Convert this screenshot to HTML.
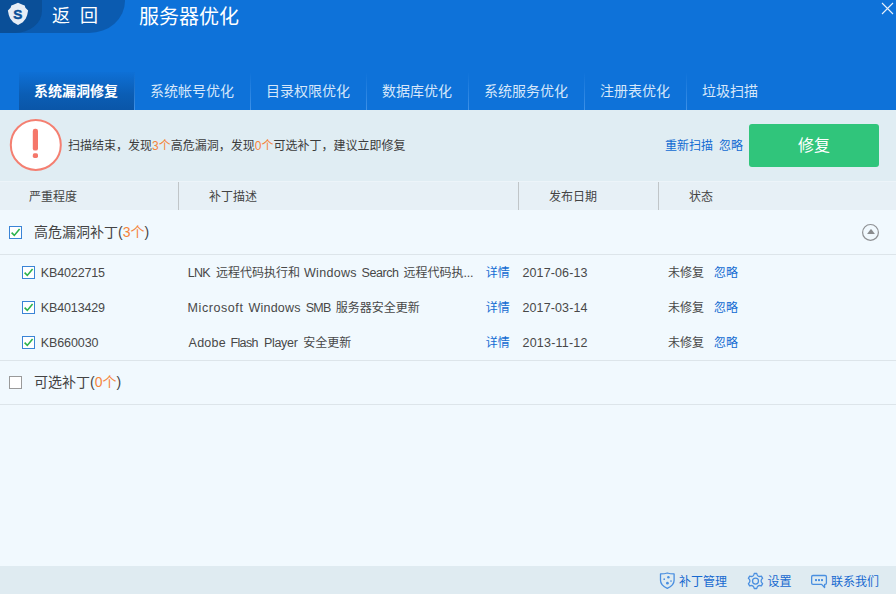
<!DOCTYPE html>
<html lang="zh-CN">
<head>
<meta charset="utf-8">
<title>服务器优化</title>
<style>
*{box-sizing:border-box;margin:0;padding:0}
html,body{width:896px;height:594px;overflow:hidden;background:#f1f9fe}
body{font-family:"Liberation Sans","Noto Sans CJK SC",sans-serif;font-size:12px;color:#444;position:relative}
.abs{position:absolute;white-space:nowrap}
#hdr{left:0;top:0;width:896px;height:110px;background:#0e72d9}
#back{left:0;top:0;width:124.5px;height:33px;background:#0b5bb0;border-bottom-right-radius:36px 32px;overflow:hidden}
#logo-bg{left:0;top:0;width:42px;height:33px;background:#0a4f98;border-bottom-right-radius:27px 22px}
#back-txt{left:52px;top:0;height:33px;line-height:32px;font-size:18px;color:#fff}
#back-txt span{display:inline-block;width:18px}
#title{left:139px;top:1px;height:34px;line-height:33px;font-size:20px;color:#fff}
#tabs{left:19px;top:72px;height:38px;display:flex}
.tab{position:relative;height:38px;line-height:38px;padding:0 17px 0 15px;font-size:14px;color:#d6e7fa}
.tab:after{content:"";position:absolute;right:0;top:0;width:1px;height:38px;background:linear-gradient(rgba(70,150,235,0),#3f92e8)}
.tab.on{color:#fff;font-weight:bold;background:linear-gradient(#0e70d6,#0b5db4 60%,#0a56a8)}
.tab:last-child:after{display:none}
#alert{left:0;top:110px;width:896px;height:71px;background:#e0edf3}
#thead{left:0;top:181px;width:896px;height:29px;background:#e7f0f6;box-shadow:inset 0 1px 0 #edf4f9}
.th{top:1px;height:29px;line-height:30px;font-size:12px;color:#444}
.vsep{top:1px;width:1px;height:28px;background:#c0c5c8}
.hl{left:0;width:896px;height:1px;background:#dde5ea}
.or{color:#f5843b}
a,.lnk{color:#116bd2;text-decoration:none}
.row{left:0;width:896px;height:20px;line-height:20px;font-size:12px;color:#484848}
.row .abs{top:0}
.row .en{font-size:12.5px}
.cb{width:13px;height:13px;border:1px solid #3a84d6;background:#fff}
.cb.off{border-color:#9a9a9a}
.grp{font-size:14px;color:#444;height:20px;line-height:20px}
#foot{left:0;top:566px;width:896px;height:28px;background:#dfebf1}
.fl{top:2px;height:28px;line-height:29px;font-size:12px;color:#1769d0}
</style>
</head>
<body>
<div id="hdr" class="abs">
  <div id="back" class="abs"><div id="logo-bg" class="abs"></div></div>
  <svg class="abs" style="left:0;top:0" width="44" height="33" viewBox="0 0 44 33">
    <path d="M18 2.7 L22.6 4.8 L24.7 5.6 L25.4 7.8 L28.1 10.5 L27.2 15 L25.8 18.6 L22.8 22.2 L18 25.1 L13.2 22.2 L10.2 18.6 L8.8 15 L7.9 10.5 L10.6 7.8 L11.3 5.6 L13.4 4.8 Z" fill="#e6edf6"/>
    <text x="17.9" y="18.9" text-anchor="middle" style="font-family:'Liberation Sans',sans-serif;font-weight:700;font-size:13.6px" fill="#0a4f98" stroke="#0a4f98" stroke-width="0.5">S</text>
  </svg>
  <div id="back-txt" class="abs"><span>返</span><span style="width:10px"></span><span>回</span></div>
  <div id="title" class="abs">服务器优化</div>
  <svg class="abs" style="left:880px;top:1px" width="15" height="15" viewBox="0 0 15 15"><path d="M2 2 L13 13 M13 2 L2 13" stroke="#e8f1fb" stroke-width="1.1" fill="none"/></svg>
  <div id="tabs" class="abs">
    <div class="tab on">系统漏洞修复</div>
    <div class="tab">系统帐号优化</div>
    <div class="tab">目录权限优化</div>
    <div class="tab">数据库优化</div>
    <div class="tab">系统服务优化</div>
    <div class="tab">注册表优化</div>
    <div class="tab">垃圾扫描</div>
  </div>
</div>

<div id="alert" class="abs">
  <svg class="abs" style="left:9px;top:8px" width="54" height="54" viewBox="0 0 54 54">
    <circle cx="26.8" cy="26.9" r="25" fill="#ffffff" stroke="#f47f71" stroke-width="2"/>
    <rect x="23.8" y="10.8" width="5.2" height="21.8" rx="2.2" fill="#f5776a"/>
    <rect x="23.8" y="35.3" width="5.2" height="4.6" rx="1.6" fill="#f5776a"/>
  </svg>
  <div class="abs" style="left:68px;top:26px;height:20px;line-height:20px;font-size:12px;color:#3c3c3c">扫描结束，发现<span class="or">3个</span>高危漏洞，发现<span class="or">0个</span>可选补丁，建议立即修复</div>
  <div class="abs lnk" style="left:665px;top:26px;height:20px;line-height:20px;font-size:12px">重新扫描</div>
  <div class="abs lnk" style="left:719px;top:26px;height:20px;line-height:20px;font-size:12px">忽略</div>
  <div class="abs" style="left:749px;top:14px;width:130px;height:43px;background:#30c57b;border-radius:3px;color:#fff;font-size:16px;text-align:center;line-height:43px">修复</div>
</div>

<div id="thead" class="abs">
  <div class="abs th" style="left:29px">严重程度</div>
  <div class="abs vsep" style="left:178px"></div>
  <div class="abs th" style="left:209px">补丁描述</div>
  <div class="abs vsep" style="left:518px"></div>
  <div class="abs th" style="left:549px">发布日期</div>
  <div class="abs vsep" style="left:658px"></div>
  <div class="abs th" style="left:689px">状态</div>
</div>

<!-- group 1 -->
<div class="abs cb" style="left:9px;top:226px"><svg width="11" height="11" viewBox="0 0 11 11" style="display:block"><path d="M1.6 5.6 L4.3 8.4 L9.6 1.9" stroke="#2bb24c" stroke-width="1.6" fill="none"/></svg></div>
<div class="abs grp" style="left:34px;top:222px">高危漏洞补丁(<span class="or">3个</span>)</div>
<svg class="abs" style="left:860px;top:222px" width="22" height="22" viewBox="860 222 22 22"><circle cx="870.5" cy="232.4" r="7.9" fill="none" stroke="#8f9194" stroke-width="1.2"/><path d="M867.1 233.9 L870.6 229.3 L871.4 229.3 L874.9 233.9 Z" fill="#8a8c8e"/></svg>
<div class="abs hl" style="top:254px"></div>

<div class="abs row" style="top:263px">
  <div class="abs cb" style="left:22px;top:3px"><svg width="11" height="11" viewBox="0 0 11 11" style="display:block"><path d="M1.6 5.6 L4.3 8.4 L9.6 1.9" stroke="#2bb24c" stroke-width="1.6" fill="none"/></svg></div>
  <div class="abs en" style="left:40.8px;letter-spacing:-0.14px">KB4022715</div>
  <div class="abs desc" style="left:187.75px"><span class="en" style="letter-spacing:-0.74px">LNK</span> <span style="margin-left:2.80px">远程代码执行和</span> <span class="en" style="letter-spacing:0.30px;margin-left:0.64px">Windows</span> <span class="en" style="letter-spacing:-0.43px;margin-left:1.44px">Search</span> <span style="margin-left:1.62px">远程代码执</span><span class="en" style="letter-spacing:-0.22px;margin-left:-0.12px">...</span></div>
  <div class="abs lnk" style="left:485.8px">详情</div>
  <div class="abs en" style="left:522.5px;letter-spacing:0.11px">2017-06-13</div>
  <div class="abs" style="left:668px">未修复</div>
  <div class="abs lnk" style="left:714px">忽略</div>
</div>
<div class="abs row" style="top:298px">
  <div class="abs cb" style="left:22px;top:3px"><svg width="11" height="11" viewBox="0 0 11 11" style="display:block"><path d="M1.6 5.6 L4.3 8.4 L9.6 1.9" stroke="#2bb24c" stroke-width="1.6" fill="none"/></svg></div>
  <div class="abs en" style="left:40.8px;letter-spacing:-0.14px">KB4013429</div>
  <div class="abs desc" style="left:187.60px"><span class="en" style="letter-spacing:0.57px">Microsoft</span> <span class="en" style="letter-spacing:0.19px;margin-left:1.81px">Windows</span> <span class="en" style="letter-spacing:-0.77px;margin-left:1.71px">SMB</span> <span style="margin-left:1.88px">服务器安全更新</span></div>
  <div class="abs lnk" style="left:485.8px">详情</div>
  <div class="abs en" style="left:522.5px;letter-spacing:0.11px">2017-03-14</div>
  <div class="abs" style="left:668px">未修复</div>
  <div class="abs lnk" style="left:714px">忽略</div>
</div>
<div class="abs row" style="top:333px">
  <div class="abs cb" style="left:22px;top:3px"><svg width="11" height="11" viewBox="0 0 11 11" style="display:block"><path d="M1.6 5.6 L4.3 8.4 L9.6 1.9" stroke="#2bb24c" stroke-width="1.6" fill="none"/></svg></div>
  <div class="abs en" style="left:40.8px;letter-spacing:-0.1px">KB660030</div>
  <div class="abs desc" style="left:188.60px"><span class="en" style="letter-spacing:0.23px">Adobe</span> <span class="en" style="letter-spacing:-0.60px;margin-left:1.16px">Flash</span> <span class="en" style="letter-spacing:-0.29px;margin-left:2.58px">Player</span> <span style="margin-left:2.35px">安全更新</span></div>
  <div class="abs lnk" style="left:485.8px">详情</div>
  <div class="abs en" style="left:522.5px;letter-spacing:0.21px">2013-11-12</div>
  <div class="abs" style="left:668px">未修复</div>
  <div class="abs lnk" style="left:714px">忽略</div>
</div>
<div class="abs hl" style="top:360px"></div>

<!-- group 2 -->
<div class="abs cb off" style="left:9px;top:376px"></div>
<div class="abs grp" style="left:34px;top:372px">可选补丁(<span class="or">0个</span>)</div>
<div class="abs hl" style="top:404px"></div>

<div id="foot" class="abs">
  <svg class="abs" style="left:650px;top:0" width="186" height="28" viewBox="650 566 186 28" fill="none" stroke="#4a8fe0" stroke-width="1.3" stroke-linejoin="round">
    <path d="M660.5 573.9 C663 573.9 665.4 573.6 667.3 573 C669.2 573.6 671.6 573.9 674.1 573.9 V580.2 C674.1 584 671.2 586.6 667.3 588.3 C663.4 586.6 660.5 584 660.5 580.2 Z"/>
    <g fill="#4a8fe0" stroke="none"><circle cx="668.4" cy="577.2" r="1.25"/><circle cx="664.2" cy="579.2" r="0.85"/><circle cx="671" cy="581" r="0.85"/><circle cx="667.4" cy="583.2" r="1.35"/></g>
    <path d="M754.25 573.50 L756.75 573.50 Q757.50 577.54 761.36 576.17 L762.62 578.34 Q759.50 581.00 762.62 583.66 L761.36 585.83 Q757.50 584.46 756.75 588.50 L754.25 588.50 Q753.50 584.46 749.64 585.83 L748.38 583.66 Q751.50 581.00 748.38 578.34 L749.64 576.17 Q753.50 577.54 754.25 573.50 Z"/>
    <circle cx="755.5" cy="581.1" r="3.0"/>
    <path d="M813 575.5 H825.1 Q826.4 575.5 826.4 576.8 V583.1 Q826.4 584.4 825.1 584.4 H824.6 V587.5 L821.6 584.4 H813 Q811.65 584.4 811.65 583.1 V576.8 Q811.65 575.5 813 575.5 Z"/>
    <g fill="#4a8fe0" stroke="none"><rect x="815" y="579.1" width="2" height="2"/><rect x="818" y="579.1" width="2" height="2"/><rect x="821" y="579.1" width="2" height="2"/></g>
  </svg>
  <div class="abs fl" style="left:679px">补丁管理</div>
  <div class="abs fl" style="left:767.5px">设置</div>
  <div class="abs fl" style="left:831px">联系我们</div>
</div>
</body>
</html>
